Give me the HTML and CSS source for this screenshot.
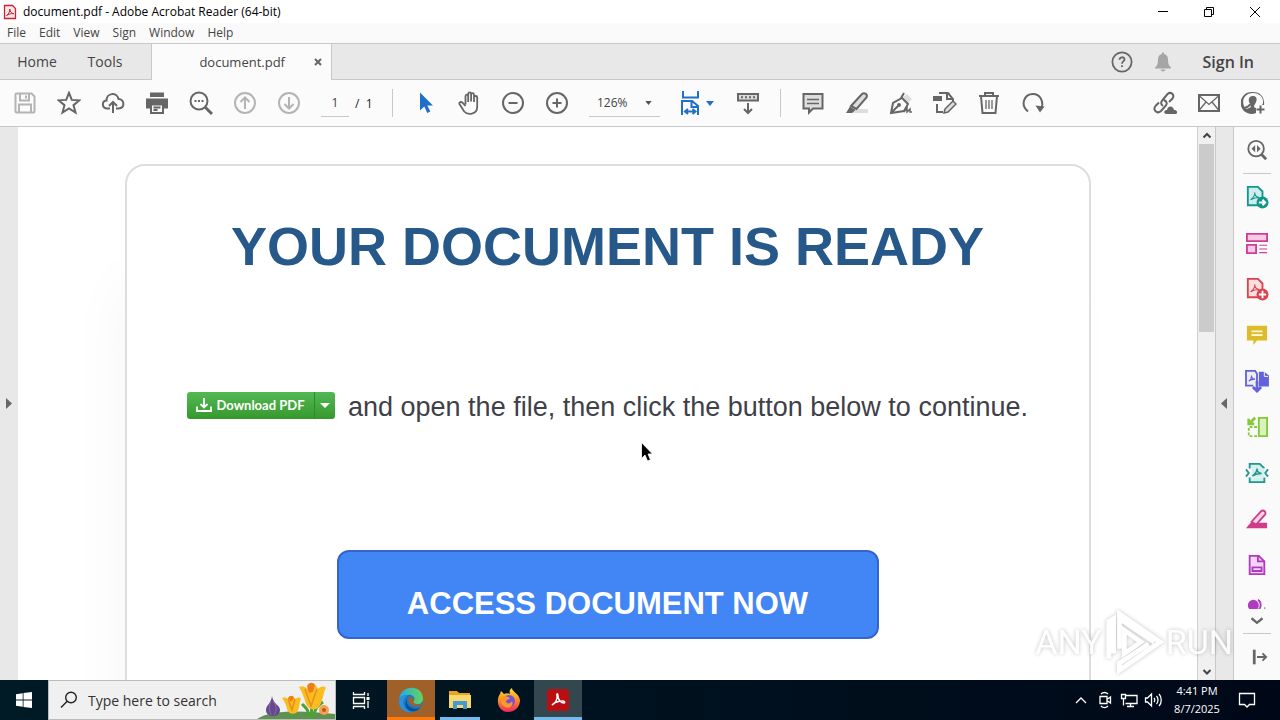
FILE: index.html
```html
<!DOCTYPE html>
<html lang="en">
<head>
    <meta charset="UTF-8">
    <meta name="viewport" content="width=device-width, initial-scale=1.0">
    <title>document.pdf - Adobe Acrobat Reader (64-bit)</title>
    <link rel="stylesheet" href="styles.css">
</head>
<body>

    <!-- Title bar -->
    <header class="titlebar">
        <svg class="app-icon" width="14" height="16" viewBox="0 0 14 16" fill="#fbe9e9" stroke="#c8242f"><path d="M1.500 1.500h8l3 3v10h-11z" stroke-width="1.300"/><path d="M3.500 11.500c2-1 3.500-4 3.300-6.500.2 3 2 4.500 4 4.700-3-.3-5 .5-7.300 1.800z" fill="none"/></svg>
        <span class="window-title">document.pdf - Adobe Acrobat Reader (64-bit)</span>
        <div class="window-buttons">
            <button aria-label="Minimize"><svg width="12" height="12" viewBox="0 0 12 12"><path d="M1 5.500h10"/></svg></button>
            <button aria-label="Restore"><svg width="12" height="12" viewBox="0 0 12 12"><path d="M1.500 3.500h7v7h-7zM3.500 3V1.500h7v7H9"/></svg></button>
            <button aria-label="Close"><svg width="12" height="12" viewBox="0 0 12 12"><path d="M1 1l10 10M11 1L1 11"/></svg></button>
        </div>
    </header>

    <nav class="menubar">
        <button>File</button>
        <button>Edit</button>
        <button>View</button>
        <button>Sign</button>
        <button>Window</button>
        <button>Help</button>
    </nav>

    <!-- Tabs -->
    <div class="tabs">
        <button class="tab-home">Home</button>
        <button class="tab-tools">Tools</button>
        <div class="tab-doc">
            <span>document.pdf</span>
            <button aria-label="Close tab"><svg width="8" height="8" viewBox="0 0 8 8"><path d="M1 1l6 6M7 1L1 7" stroke="#666" stroke-width="2"/></svg></button>
        </div>
        <div class="account">
            <button aria-label="Help"><svg width="22" height="22" viewBox="0 0 22 22" fill="none" stroke="#666" stroke-width="1.800"><circle cx="11" cy="11" r="9.600"/><path d="M8.500 8.800c0-3.400 5-3.200 5-.4 0 2-2.500 2-2.500 4.300M11 14.200v1.800"/></svg></button>
            <button aria-label="Notifications"><svg width="18" height="20" viewBox="0 0 18 20" fill="#a5a5a5"><path d="M8 .5h2V2c3 .6 4 3 4 5.500 0 4.500 1 6.500 3 8v1H1v-1c2-1.500 3-3.500 3-8C4 5 5 2.600 8 2zM6.500 17.500h5c-.5 2.500-4.500 2.500-5 0z"/></svg></button>
            <button class="sign-in">Sign In</button>
        </div>
    </div>

    <!-- Toolbar -->
    <div class="toolbar">
        <button class="tool off" aria-label="Save"><svg viewBox="0 0 24 24"><path d="M2.500 3.500a1 1 0 0 1 1-1h15l3 3v15a1 1 0 0 1-1 1h-17a1 1 0 0 1-1-1zM7 3v6.500h9V3M13 4.500v3M6 21v-7.500h12V21"/></svg></button>
        <button class="tool" aria-label="Star"><svg viewBox="0 0 24 24"><path d="M12 1.800l2.800 7.100 7.700.4-6 4.900 2 7.400-6.500-4.200-6.500 4.200 2-7.400-6-4.900 7.700-.4z" fill="none"/></svg></button>
        <button class="tool" aria-label="Upload"><svg viewBox="0 0 24 24"><path d="M9 17.500H6.500C.5 17.500.500 10 5.500 9.500 5.500 1.500 16 1 17.500 8c6 0 7 9.500 0 9.500H15M12 22V11.500M8 15l4-4 4 4"/></svg></button>
        <button class="tool" aria-label="Print"><svg viewBox="0 0 24 24"><path d="M5 1.500h14v4.500H5zM1 7.500h22v10h-4v-4H5v4H1z" fill="#666" stroke="none"/><path d="M6 13.500h12v8.500H6zM8.500 16.500h7M8.500 19h4"/></svg></button>
        <button class="tool" aria-label="Search"><svg viewBox="0 0 24 24"><circle cx="10" cy="10" r="8.500"/><path d="M16 16l7 7" stroke-width="3"/><path d="M5.500 10h2M9 10h2M12.500 10h2"/></svg></button>
        <button class="tool off" aria-label="Previous page"><svg viewBox="0 0 24 24"><circle cx="12" cy="12" r="10"/><path d="M12 18V7M7.500 11L12 6.500l4.500 4.500"/></svg></button>
        <button class="tool off" aria-label="Next page"><svg viewBox="0 0 24 24"><circle cx="12" cy="12" r="10"/><path d="M12 6v11M7.500 13l4.500 4.500 4.500-4.500"/></svg></button>
        <input class="page-input" type="text" value="1" aria-label="Page number">
        <span class="page-total">/ &nbsp;1</span>
        <span class="divider"></span>
        <button class="tool" aria-label="Select"><svg viewBox="0 0 24 24"><path d="M7 1.500v18l4.300-4 3 6.500 3-1.400-3-6H20z" fill="#1f70c9" stroke="none"/></svg></button>
        <button class="tool" aria-label="Hand"><svg viewBox="0 0 24 24"><path d="M8.500 13.500V5.200c0-2.200 2.700-2.200 2.700 0V11M11.200 10V3c0-2.100 2.900-2.100 2.900 0v7.500M14.100 10V3.700c0-2 2.900-2 2.900 0V11M17 10V6.500c.2-2 3.200-2 3.200 0v9c0 9-10 8.500-13 5L2.500 13c-.7-2 1.700-2.500 2.800-1.500l3.200 3.500" stroke-width="1.800"/></svg></button>
        <button class="tool" aria-label="Zoom out"><svg viewBox="0 0 24 24"><circle cx="12" cy="12" r="10"/><path d="M7.500 12h9"/></svg></button>
        <button class="tool" aria-label="Zoom in"><svg viewBox="0 0 24 24"><circle cx="12" cy="12" r="10"/><path d="M7.500 12h9M12 7.500v9"/></svg></button>
        <div class="zoom">
            <select aria-label="Zoom level"><option>126%</option></select>
            <svg width="7" height="4" viewBox="0 0 8 5"><path d="M0 0h8L4 5z" fill="#555"/></svg>
        </div>
        <button class="tool fit" aria-label="Fit width"><svg viewBox="0 0 24 24"><path d="M4 0v6.500h15V0M3 24V10h10l6 5v9M12.500 10v6H19M6.500 20.500h9M9 18l-3 2.500L9 23M13.500 18l3 2.500-3 2.500" stroke="#1f70c9"/></svg><svg class="caret" viewBox="0 0 8 5"><path d="M0 0h8L4 5z" fill="#1f70c9" stroke="none"/></svg></button>
        <button class="tool" aria-label="Read mode"><svg viewBox="0 0 24 24"><path d="M2 3h20v6.500H2z" fill="#ddd"/><path d="M5 6.200h2M9 6.200h2M13 6.200h2M17 6.200h2M12 12v10M8 18l4 4 4-4"/></svg></button>
        <span class="divider"></span>
        <button class="tool" aria-label="Comment"><svg viewBox="0 0 24 24"><path d="M2.500 3h19v14.500H12l-4 4v-4H2.500z" fill="#ddd"/><path d="M6 8.500h12M6 12.500h12" stroke-width="1.300"/></svg></button>
        <button class="tool" aria-label="Highlight"><svg viewBox="0 0 24 24"><path d="M9 18h14v4H5z" fill="#ddd" stroke="none"/><path d="M6 15L17 3c2.500-2 6 .500 4.500 3.500L11.500 18z" fill="#ddd"/><path d="M5 15.500l5.500 3.500L7 22H1z" fill="#666" stroke="none"/></svg></button>
        <button class="tool" aria-label="Fill and sign"><svg viewBox="0 0 24 24"><path d="M13 7l5-4 5 5-4 4z" fill="#ddd" stroke="none"/><path d="M2 22l2-10 9-5 6 6-4 7zM12 7l3-5M2 22l7-7" /><circle cx="10" cy="14" r="1" fill="#666"/><path d="M15 21l3-4v4l3-3v3h2" stroke-width="1.500"/></svg></button>
        <button class="tool" aria-label="Edit PDF"><svg viewBox="0 0 24 24"><path d="M6 2h9l5 6v2M14 2v6h6M4 13v8h6"/><path d="M0 5h9v5H0z" fill="#666" stroke="none"/><path d="M12 18l8-8 3 3-8 8-4 1z" fill="#ddd" stroke-width="1.500"/></svg></button>
        <button class="tool" aria-label="Delete"><svg viewBox="0 0 24 24"><path d="M2 5h20M8 5V2h8v3M4 5l1.500 17h13L20 5"/><path d="M9 9v9M12 9v9M15 9v9" stroke-width="1.300"/></svg></button>
        <button class="tool" aria-label="Rotate"><svg viewBox="0 0 24 24"><path d="M7 20.500C-1 14 3 3 12 3c7 0 11 7 8.500 14.500"/><path d="M14.500 14.500l9 1-4.500 6z" fill="#666" stroke="none"/></svg></button>
        <div class="toolbar-right">
            <button class="tool" aria-label="Share link"><svg viewBox="0 0 24 24"><path d="M10 15c-3-2-2-4.500 0-6.500L14.500 3c3.500-3 7.500 1 5 4.500L16 11M11 9c4 2 3 4.500 1 6.500L8 20c-4 3.500-8.500-1-5.500-5L6 11.500"/><path d="M13 23c-3-.5-2-4.500 1-4 1-5 6.500-4 7 0 4 0 4 4 1 4z" fill="#666" stroke="none"/></svg></button>
            <button class="tool" aria-label="E-mail"><svg viewBox="0 0 24 24"><path d="M2 4h20v16H2z"/><path d="M2 4.500l10 9 10-9M2 19.500L9 11M22 19.500L15 11" stroke-width="1.300"/></svg></button>
            <button class="tool" aria-label="Add people"><svg viewBox="0 0 24 24"><path d="M12 1a11 11 0 1 0 3 21v-5c-3-1-2-2-1-4 2-3 3-8-2-8s-5 5-3 8c1 3 2 3-4 5-6-7-2-16 7-16s12 8 9 12h2C24 7 20 1 12 1z" fill="#666" stroke="none"/><path d="M4 17c2-1 5-2 5-4M19.500 14.500v8M15.500 18.500h8"/></svg></button>
        </div>
    </div>

    <!-- Document area -->
    <main class="workspace">
        <button class="strip strip-left" aria-label="Open navigation"><svg width="6" height="11" viewBox="0 0 6 11"><path d="M0 0l6 5.500L0 11z" fill="#666"/></svg></button>
        <div class="page">
            <section class="card">
                <h1>YOUR DOCUMENT IS READY</h1>
                <div class="message">
                    <span class="download">
                        <button class="download-main"><svg width="16" height="16" viewBox="0 0 16 16" fill="none" stroke="#fff" stroke-width="1.800"><path d="M8 1v9M4.500 7L8 10.500 11.500 7M1 9.500V14h14V9.500"/></svg>Download PDF</button>
                        <button class="download-more" aria-label="More download options"><svg width="10" height="5" viewBox="0 0 10 5"><path d="M0 0h10L5 5z" fill="#fff"/></svg></button>
                    </span>
                    <p>and open the file, then click the button below to continue.</p>
                </div>
                <a class="access" href="#">ACCESS DOCUMENT NOW</a>
            </section>
        </div>
        <div class="scrollbar">
            <svg width="16" height="17" viewBox="0 0 16 17"><path d="M4.500 10.500L8 7l3.500 3.500"/></svg>
            <div class="thumb"></div>
            <svg width="16" height="17" viewBox="0 0 16 17"><path d="M4.500 7L8 10.500 11.500 7"/></svg>
        </div>
        <button class="strip strip-right" aria-label="Collapse tools"><svg width="6" height="11" viewBox="0 0 6 11"><path d="M6 0L0 5.500 6 11z" fill="#666"/></svg></button>
        <aside class="side-tools">
            <button aria-label="Find tools"><svg viewBox="0 0 24 24" stroke="#666"><circle cx="11" cy="10.500" r="8.500"/><path d="M17 17l5 5" stroke-width="3"/><path d="M10 6.500v8l-4-4zM12 6.500v8l4-4z" fill="#666" stroke="none"/></svg></button>
            <hr>
            <button aria-label="Export PDF"><svg viewBox="0 0 24 24" stroke="#12968b"><path d="M2 1h11l5 5v15H2z" fill="#cdeeed"/><path d="M5 15c3-2 5-5 4.500-8 0 3 2 5 5 5.500-4 0-7 1-9.500 2.500z" stroke-width="1.200"/><circle cx="18" cy="18" r="6.500" fill="#12968b" stroke="none"/><path d="M14 18h7M18 15l3 3-3 3" stroke="#fff"/></svg></button>
            <button aria-label="Organize pages"><svg viewBox="0 0 24 24" stroke="#cc3f94"><path d="M1 2h22v8H1zM1 14h10v9H1z" fill="#f6c9e6"/><path d="M14.500 14.500H23M14.500 18.500H23M14.500 22.500H23" stroke-width="1.200"/></svg></button>
            <button aria-label="Create PDF"><svg viewBox="0 0 24 24" stroke="#d7434f"><path d="M2 1h11l5 5v15H2z" fill="#fbdede"/><path d="M5 15c3-2 5-5 4.500-8 0 3 2 5 5 5.500-4 0-7 1-9.500 2.500z" stroke-width="1.200"/><circle cx="18" cy="18" r="6.500" fill="#d7434f" stroke="none"/><path d="M14 18h8M18 14v8" stroke="#fff"/></svg></button>
            <button aria-label="Comment"><svg viewBox="0 0 24 24"><path d="M1 2h22v16H12l-4 5v-5H1z" fill="#debb2c"/><path d="M6 8h12M6 12h12" stroke="#fff8cc"/></svg></button>
            <button aria-label="Combine files"><svg viewBox="0 0 24 24" stroke="#6262dc"><path d="M14 2h6l5 4v12H14z" fill="#6262dc" stroke="none"/><path d="M20 2v5h4" stroke="#fff" stroke-width="1"/><path d="M8 17H0V1h10l2 3v9" fill="#eee"/><path d="M3 12c2-1 3-3 3-6 0 3 1 4 4 4-3 0-5 .500-7 2z" stroke-width="1.200"/><path d="M12 12v10M7.500 18.500L12 23l4.500-4.500" stroke-width="3"/></svg></button>
            <button aria-label="Compare"><svg viewBox="0 0 24 24" stroke="#83c835"><path d="M14 2h9v20h-9z" fill="#d9f2bf"/><path d="M12 12H3v10h10" stroke-dasharray="3 2"/><path d="M10 2L4 8M3 3v5.500h6" stroke-width="3"/></svg></button>
            <button aria-label="Compress PDF"><svg viewBox="0 0 24 24" stroke="#21958e"><path d="M4 7V2h11l5 5M4 17v5h16v-5" fill="#d4efed"/><path d="M6 7h14v10H6z" fill="#d4efed" stroke="none"/><path d="M7 15c3-2 5-5 5-8 0 3 2 5 5 5.500-4 0-7 1-10 2.500z" stroke-width="1.600"/><path d="M0 8l3 4-3 4M24 8l-3 4 3 4"/></svg></button>
            <button aria-label="Redact"><svg viewBox="0 0 24 24" stroke="#ce3c8a"><path d="M0 22l5-6h18v6z" fill="#ce3c8a" stroke="none"/><path d="M6 15L16 4c3-3 7 .500 4.500 3.500L11 18z" fill="#f7d2e6"/></svg></button>
            <button aria-label="Protect"><svg viewBox="0 0 24 24" stroke="#b03bc0"><path d="M4 2h10l6 6v14H4z" fill="#f2d5f5"/><path d="M13 2v6h7M7 14.500h10v4H7z"/></svg></button>
            <button class="cut" aria-label="Stamp"><svg viewBox="0 0 24 24" stroke="#b03bc0"><circle cx="8" cy="20" r="5" fill="#b03bc0"/><path d="M13 14c4 2 4 9 0 11M20 23h1"/></svg></button>
            <button class="more" aria-label="More tools"><svg viewBox="0 0 24 24" stroke="#666"><path d="M6 9l6 5 6-5" stroke-width="2.500"/></svg></button>
            <hr>
            <button aria-label="Hide tools pane"><svg viewBox="0 0 24 24" stroke="#666"><path d="M9 4v16" stroke-width="3"/><path d="M12 12h10M18 8l4 4-4 4"/></svg></button>
        </aside>
    </main>

    <!-- Taskbar -->
    <footer class="taskbar">
        <button class="start" aria-label="Start"><svg width="16" height="16" viewBox="0 0 16 16" fill="#fff"><path d="M0 2.200L6.700 1.200v6.400H0zM7.500 1.100L16 0v7.600H7.500zM0 8.400h6.700v6.400L0 13.800zM7.500 8.400H16V16l-8.500-1.100z"/></svg></button>
        <label class="search">
            <svg width="18" height="18" viewBox="0 0 18 18" fill="none" stroke="#222" stroke-width="1.400"><circle cx="11" cy="6.500" r="5.300"/><path d="M7.200 10.300L1 16.500"/></svg>
            <input type="text" placeholder="Type here to search" aria-label="Search">
            <svg width="80" height="38" viewBox="0 0 80 38"><path d="M2 38c13-9 42-9 78-5v5z" fill="#5f9150"/><path d="M56 38c0-8 1-10 1-14M37 38c0-6-1-8-1-10M59 36c0-9 5-12 9-15M54 37c0-8-3-10-7-14" stroke="#4da03a" stroke-width="3" fill="none"/><path d="M17 15c1 8 8 9 8 14 0 8-14 8-14 0 0-5 5-6 6-14z" fill="#65498b"/><path d="M16 20c-2 5-2 9 0 14M18 20c4 5 4 10 1 14" stroke="#8c69b5" fill="none"/><path d="M27 17c3-1 5 0 6 1 2-4 5-4 7 0 3-2 5-2 6 0-2 3-1 11-5 14-4 2-8 0-9-4-1-5-3-8-5-11z" fill="#f8bd20"/><path d="M44 6c4-2 7 0 8 2 3-7 8-7 11 0 3-3 6-3 8-1-3 4-3 15-8 20-4 3-10 1-12-4-2-7-4-12-7-17z" fill="#f9bd22"/><path d="M50 8l6 17 6-17M33 18l4 11 3-11" stroke="#eb8e18" stroke-width="1.500" fill="none"/><path d="M52 5c2-4 6-4 8-1l-2 7-4 1zM33 17c2-3 5-3 6 0l-3 4z" fill="#ef7e18"/><circle cx="69" cy="29" r="5" fill="#f3a24f"/><circle cx="69" cy="29" r="2" fill="#b65a20"/></svg>
        </label>
        <button class="app task-view" aria-label="Task view"><svg width="20" height="20" viewBox="0 0 20 20" fill="none" stroke="#fff" stroke-width="1.300"><path d="M2.500 2v2.500h11V2M2.500 7.500h11v6h-11zM2.500 19v-2.500h11V19M17 3v3M17 11v7"/><path d="M17 7v3" stroke-width="3"/></svg></button>
        <button class="app edge" aria-label="Microsoft Edge"><svg width="26" height="26" viewBox="0 0 26 26"><defs><linearGradient id="edge-top"><stop stop-color="#2aa7df"/><stop offset="1" stop-color="#62d65c"/></linearGradient></defs><circle cx="13" cy="13" r="12" fill="#167bc5"/><path d="M1 13C2-3 25-3 25 12c0 6-9 7-10 3 4-4-1-8-5-7-5 0-8 2-9 5z" fill="url(#edge-top)"/><path d="M10 8c-8 5-5 16 5 17-13 2-16-10-13-14 2-2 5-3 8-3z" fill="#2a91dc"/><path d="M10 11c-4 6 3 13 12 10-7 8-20 0-12-10z" fill="#0b4f9b"/><path d="M11 10c-3 6 4 11 11 9l3-3c-2 2-8 2-10-1 2-2 1-5-4-5z" fill="#a0602a"/></svg></button>
        <button class="app open" aria-label="File Explorer"><svg width="22" height="20" viewBox="0 0 22 20"><path d="M0 1h8l2 2h11v5H0z" fill="#e7a523"/><path d="M0 5h22v13H0z" fill="#fbd86d"/><path d="M4 11h14v8h-4v-4H8v4H4z" fill="#429bd4"/></svg></button>
        <button class="app" aria-label="Firefox"><svg width="24" height="24" viewBox="0 0 24 24"><defs><linearGradient id="fox" x2="0" y2="1"><stop stop-color="#ffe02f"/><stop offset=".5" stop-color="#ff8b21"/><stop offset="1" stop-color="#ed2763"/></linearGradient></defs><path d="M4 3l3 3c2-1 4-1 6 0-1-3 0-5 2-6 0 4 7 5 8 12 0 8-6 12-12 12C2 24-2 13 3 6z" fill="url(#fox)"/><circle cx="12" cy="13" r="6" fill="#7652d9"/><path d="M5 9c4-2 6 0 8 1-1 2-4 1-4 4 1 2 5 2 6-1 2 5-3 8-7 6s-5-6-3-10z" fill="#ff982a"/></svg></button>
        <button class="app open current" aria-label="Adobe Acrobat"><svg width="22" height="22" viewBox="0 0 22 22"><rect width="22" height="22" rx="3" fill="#b90f12"/><path d="M5 16c3-1 6-6 5-9-.5-3 1-3 1 0 0 4 3 7 6 7 1 0 1-2-1-2-4 0-8 1-11 4z" fill="none" stroke="#fff" stroke-width="1.500"/></svg></button>
        <div class="tray">
            <svg viewBox="0 0 18 20"><path d="M4 13l5-5 5 5"/></svg>
            <svg viewBox="0 0 18 20"><path d="M4 6.500h7v7H4zM11.500 9l3-2v6l-3-2M5 4c2-2 5-2 7 0M5 16c2 2 5 2 7 0"/></svg>
            <svg viewBox="0 0 18 20"><path d="M5 5.500h12v8H5.500M1.500 4.500h4v4h-4zM3.500 8.500v7M10.500 13.500v3M7 16.500h7"/></svg>
            <svg viewBox="0 0 18 20"><path d="M1.500 8h2l4-4v12l-4-4h-2zM10 8c1 1 1 3 0 4M12.500 6c2 2 2 6 0 8M15 4c3 3 3 9 0 12"/></svg>
            <div class="clock"><span>4:41 PM</span><span>8/7/2025</span></div>
            <button class="notices" aria-label="Notifications"><svg viewBox="0 0 18 20"><path d="M1.500 3.500h15v11h-5L9 17l-2.500-2.500h-5z"/></svg></button>
        </div>
    </footer>

    <div class="watermark">
        <span>ANY</span>
        <svg width="60" height="64" viewBox="0 0 62 66" fill="none" stroke="#fff" stroke-width="5"><path d="M5 50V12l5-3v36M16 40V4l42 29-42 29v-7l30-20M16 9l36 24"/><path d="M21 21v24l17-12z"/></svg>
        <span>RUN</span>
    </div>
    <svg class="cursor" width="12" height="20" viewBox="0 0 12 20"><path d="M.5.500v16l3.500-3.500 2.500 6 3-1.200L7 12h4.500z" fill="#000" stroke="#fff" stroke-width=".8"/></svg>

</body>
</html>
```
FILE: styles.css
```css
/* General Styles */
* {
    box-sizing: border-box;
}
body {
    margin: 0;
    height: 100vh;
    display: flex;
    flex-direction: column;
    overflow: hidden;
    position: relative;
    font-family: "Open Sans", "Noto Sans", sans-serif;
    font-size: 12px;
    color: #444;
    background: #fff;
}
button {
    border: none;
    background: none;
    padding: 0;
    font: inherit;
    color: inherit;
    display: flex;
    align-items: center;
    justify-content: center;
}
svg {
    flex: none;
}

/* Title bar and menu */
.titlebar {
    height: 23px;
    flex: none;
    display: flex;
    align-items: center;
    gap: 6px;
    padding: 0 2px 0 3px;
    color: #000;
}
.window-buttons {
    display: flex;
    margin-left: auto;
}
.window-buttons button {
    width: 46px;
    height: 22px;
}
.window-buttons svg {
    fill: none;
    stroke: #000;
}
.menubar {
    height: 20px;
    flex: none;
    display: flex;
    gap: 13px;
    padding: 0 0 2px 7px;
    background: #fafafa;
}

/* Tabs */
.tabs {
    height: 37px;
    flex: none;
    display: flex;
    background: #e8e8e8;
    border-top: 1px solid #c8c8c8;
    border-bottom: 1px solid #c8c8c8;
    font-size: 14px;
}
.tab-home {
    width: 74px;
}
.tab-tools {
    width: 62px;
}
.tab-doc {
    display: flex;
    align-items: center;
    justify-content: flex-end;
    gap: 29px;
    width: 181px;
    margin: 0 0 -1px 15px;
    padding-right: 9px;
    background: #fbfbfb;
    border: solid #c8c8c8;
    border-width: 0 1px;
    font-size: 13px;
}
.account {
    display: flex;
    align-items: center;
    gap: 21px;
    margin-left: auto;
    padding-right: 26px;
}
.sign-in {
    margin-left: 10px;
    font-size: 16px;
    font-weight: 600;
}

/* Toolbar */
.toolbar {
    height: 47px;
    flex: none;
    display: flex;
    align-items: center;
    padding: 0 5px 0 3px;
    background: #fbfbfb;
    border-bottom: 1px solid #c8c8c8;
}
.tool {
    width: 44px;
    height: 44px;
    flex: none;
}
.tool svg {
    width: 24px;
    height: 24px;
    fill: none;
    stroke: #666;
    stroke-width: 2;
}
.tool.off svg {
    stroke: #b4b4b4;
}
.tool.fit {
    width: 56px;
    gap: 3px;
    padding-right: 4px;
}
.tool .caret {
    width: 8px;
    height: 5px;
}
.page-input {
    width: 28px;
    height: 28px;
    margin-left: 10px;
    padding: 0;
    border: none;
    border-bottom: 1px solid #c8c8c8;
    background: none;
    font: inherit;
    color: #444;
    text-align: center;
}
.page-total {
    width: 33px;
    margin-left: 6px;
    color: #222;
}
.divider {
    width: 1px;
    height: 28px;
    margin: 0 10px 0 4px;
    background: #c8c8c8;
}
.tool + .divider {
    margin-left: 10px;
}
.zoom {
    width: 71px;
    height: 28px;
    display: flex;
    align-items: center;
    margin: 0 10px;
    padding: 0 8px;
    border-bottom: 1px solid #c8c8c8;
}
.zoom select {
    flex: 1;
    padding: 0;
    border: none;
    background: none;
    appearance: none;
    font: inherit;
    color: #444;
}
.toolbar-right {
    display: flex;
    margin-left: auto;
}

/* Document area */
.workspace {
    flex: 1;
    min-height: 0;
    display: flex;
}
.strip {
    width: 18px;
    flex: none;
    background: #e8e8e8;
}
.strip-right {
    width: 19px;
    padding-right: 2px;
    border: solid #c8c8c8;
    border-width: 0 1px;
}
.page {
    flex: 1;
    padding: 37px 20px 0;
    overflow: hidden;
}
.card {
    max-width: 966px;
    min-height: 700px;
    margin: 0 auto;
    padding: 48px 0;
    display: flex;
    flex-direction: column;
    align-items: center;
    background: #fff;
    border: 2px solid #ddd;
    border-radius: 20px;
    box-shadow: -16px 100px 60px -20px rgba(0, 0, 0, 0.05);
    font-family: "Liberation Sans", Arial, sans-serif;
}
.card h1 {
    margin: 0;
    font-size: 54px;
    line-height: 64px;
    color: #26588a;
}
.message {
    display: flex;
    align-items: center;
    gap: 13px;
    margin: 109px 0 127px;
    font-size: 27px;
    color: #404048;
}
.message p {
    margin: 0;
    padding-top: 4px;
    line-height: 32px;
}
.download {
    display: flex;
    height: 27px;
    border-radius: 3px;
    background: linear-gradient(#53b853, #36992f);
    font-family: Lato, sans-serif;
    font-size: 13px;
    font-weight: bold;
    color: #fff;
}
.download-main {
    width: 127px;
    gap: 4px;
}
.download-more {
    width: 21px;
    border-left: 1px solid #2e8a2c;
}
.access {
    width: 542px;
    height: 89px;
    padding-top: 16px;
    border: 2px solid #3366cc;
    border-radius: 12px;
    background: #4285f4;
    color: #fff;
    font-size: 31px;
    font-weight: bold;
    line-height: 72px;
    text-align: center;
    text-decoration: none;
}
.scrollbar {
    width: 18px;
    flex: none;
    display: flex;
    flex-direction: column;
    align-items: center;
    background: #f0f0f0;
    border-left: 1px solid #d0d0d0;
}
.scrollbar svg {
    fill: none;
    stroke: #444;
    stroke-width: 2;
}
.thumb {
    width: 15px;
    height: 34%;
    margin-bottom: auto;
    background: #cbcbcb;
}

/* Tools pane */
.side-tools {
    width: 46px;
    flex: none;
    display: flex;
    flex-direction: column;
    align-items: center;
    background: #fafafa;
}
.side-tools button {
    width: 46px;
    height: 46px;
    flex: none;
}
.side-tools svg {
    width: 22px;
    height: 22px;
    fill: none;
    stroke-width: 2;
    overflow: visible;
}
.side-tools hr {
    width: 28px;
    height: 1px;
    flex: none;
    margin: 0;
    border: none;
    background: #c8c8c8;
}
.side-tools .cut {
    flex: 1;
    min-height: 0;
    height: auto;
    align-items: flex-end;
    overflow: hidden;
}
.side-tools .more {
    height: 24px;
}

/* Taskbar */
.taskbar {
    height: 40px;
    flex: none;
    display: flex;
    background: linear-gradient(90deg, #001b25, #000818);
    color: #fff;
}
.start {
    width: 48px;
}
.search {
    width: 288px;
    display: flex;
    align-items: center;
    padding-left: 11px;
    background: #f0f0f0;
    border: 1px solid #bbb;
}
.search input {
    flex: 1;
    min-width: 0;
    padding: 0 0 0 10px;
    border: none;
    background: none;
    font: inherit;
    font-size: 14px;
}
.search input::placeholder {
    color: #333;
}
.app {
    width: 48px;
    margin-left: 1px;
    border-top: 3px solid transparent;
    border-bottom: 3px solid transparent;
}
.task-view {
    width: 50px;
    margin-left: 0;
}
.edge {
    background: #a0602a;
    border-bottom-color: #ff7a0a;
}
.app.open {
    width: 40px;
    margin: 0 4px 0 5px;
    border-bottom-color: #76b9ed;
}
.app.current {
    width: 48px;
    margin: 0 0 0 1px;
    background: #33474f;
}
.tray {
    display: flex;
    align-items: center;
    gap: 6px;
    margin-left: auto;
    padding-right: 13px;
}
.tray svg {
    width: 18px;
    height: 20px;
    fill: none;
    stroke: #fff;
    stroke-width: 1.3px;
}
.clock {
    width: 48px;
    display: flex;
    flex-direction: column;
    align-items: center;
    margin-left: 5px;
    white-space: nowrap;
    font-size: 11px;
    line-height: 18px;
}
.notices {
    width: 40px;
}

/* Overlays */
.watermark {
    position: absolute;
    right: 47px;
    bottom: 46px;
    display: flex;
    align-items: center;
    gap: 2px;
    color: #fff;
    font-family: "Liberation Sans Narrow", Roboto, sans-serif;
    font-size: 34px;
    filter: drop-shadow(0 0 2px rgba(0, 0, 0, 0.3));
    opacity: 0.8;
    pointer-events: none;
}
.cursor {
    position: absolute;
    left: 641px;
    top: 442px;
    pointer-events: none;
}
```
